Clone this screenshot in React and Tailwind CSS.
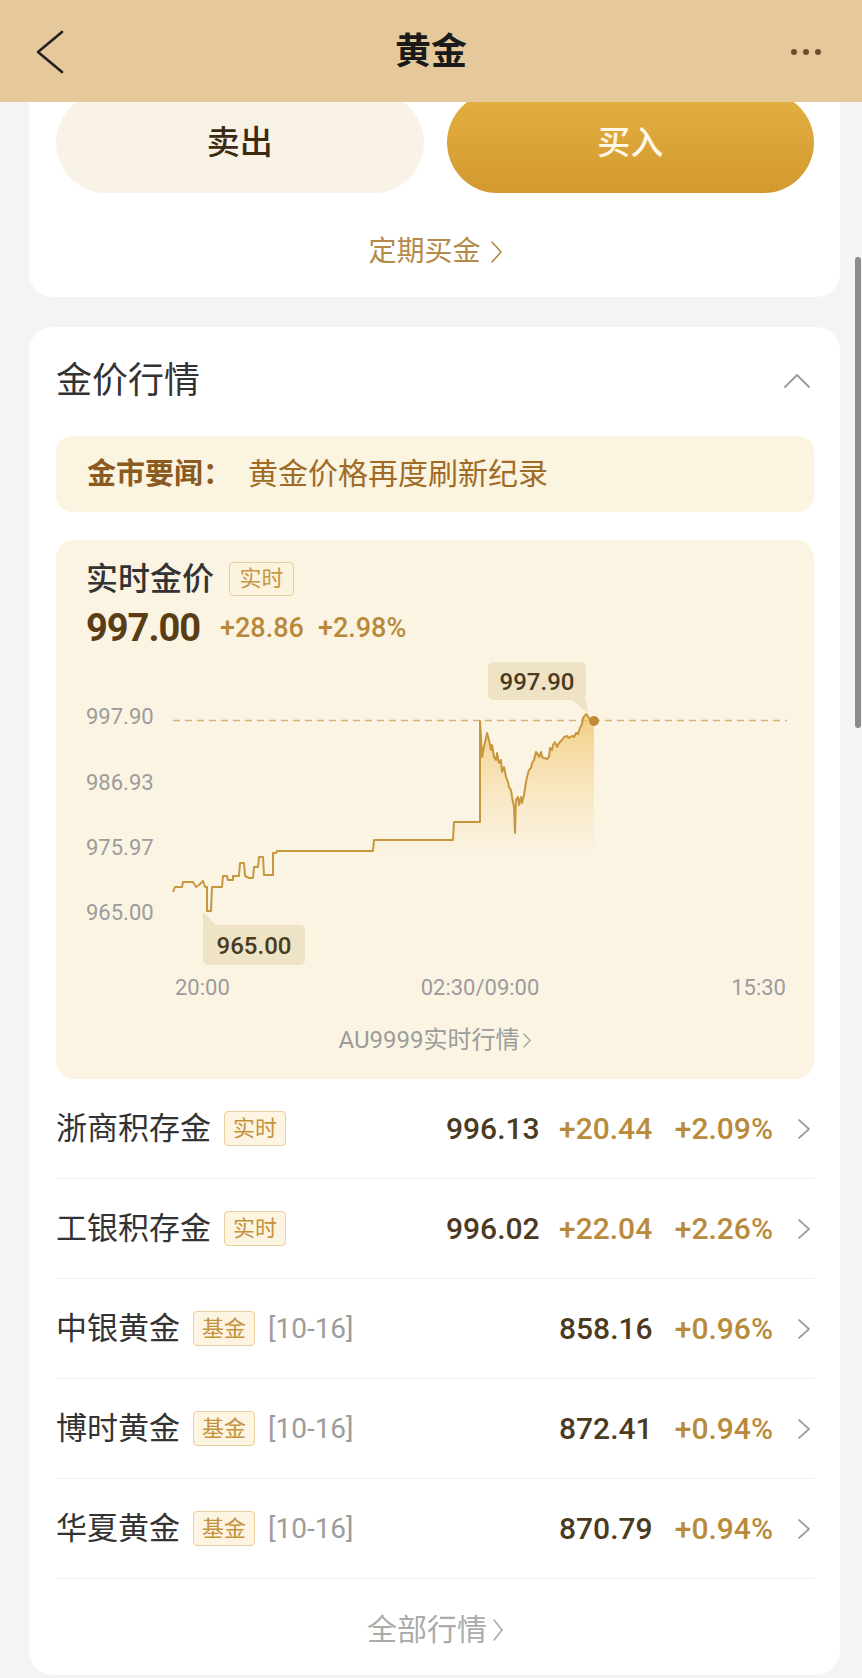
import React from "react";

const linePts = [
  [173, 892], [175, 887], [182, 887], [183, 882], [193, 882], [196, 887], [199, 885], [203, 881], [205, 887], [207, 887], [207, 911], [211, 911], [212, 887], [222, 887], [223, 876], [227, 876], [228, 880], [233, 880], [233, 876], [239, 876], [240, 863], [244, 863], [245, 876], [249, 878], [253, 878], [254, 867], [258, 867], [259, 857], [263, 857], [264, 875], [273, 875], [273, 853], [276, 853], [277, 851], [373, 851], [374, 840], [453, 840], [454, 822], [480, 822], [480, 721],
  [481, 737], [482, 757], [484, 747], [486, 738], [487, 733], [489, 740], [491, 750], [492, 745], [494, 757], [496, 760], [497, 753], [499, 763], [501, 760], [502, 772], [504, 767], [506, 777], [508, 782], [509, 787], [511, 790], [512, 797], [514, 807], [515, 833], [516, 800], [518, 797], [519, 805], [521, 797], [522, 803], [524, 795], [526, 782], [527, 777], [529, 770], [531, 768], [532, 763], [534, 760], [536, 752], [537, 753], [539, 757], [541, 752], [542, 757], [544, 758], [547, 759], [549, 757], [550, 748], [552, 750], [553, 745], [555, 742], [557, 747], [559, 743], [562, 740], [564, 737], [567, 736], [569, 738], [572, 736], [574, 737], [576, 733], [578, 734], [580, 728], [582, 724], [583, 718], [586, 714], [587, 715], [589, 718], [591, 720], [594, 721],
];

const lineD = "M" + linePts.map((p) => p.join(",")).join(" L");
const fillD = lineD + " L594,905 L173,905 Z";

function Chevron({ className = "", color = "#999", w = 12, h = 20, sw = 1.8 }) {
  return (
    <svg width={w} height={h} viewBox={`0 0 ${w} ${h}`} className={className}>
      <polyline points={`1,1 ${w - 1},${h / 2} 1,${h - 1}`} fill="none" stroke={color} strokeWidth={sw} strokeLinecap="round" strokeLinejoin="round" />
    </svg>
  );
}

function Badge({ children }) {
  return (
    <span className="inline-flex items-center justify-center h-[35px] w-[62px] rounded-[4px] border border-[#E8CF9E] bg-[#FDF4E2] text-[22px] text-[#C5923C] leading-none">
      {children}
    </span>
  );
}

const rows = [
  { name: "浙商积存金", badge: "实时", price: "996.13", change: "+20.44", pct: "+2.09%" },
  { name: "工银积存金", badge: "实时", price: "996.02", change: "+22.04", pct: "+2.26%" },
  { name: "中银黄金", badge: "基金", date: "[10-16]", price: "858.16", pct: "+0.96%" },
  { name: "博时黄金", badge: "基金", date: "[10-16]", price: "872.41", pct: "+0.94%" },
  { name: "华夏黄金", badge: "基金", date: "[10-16]", price: "870.79", pct: "+0.94%" },
];

export default function App() {
  return (
    <div className="relative w-[862px] min-h-[1678px] bg-[#F4F4F4] overflow-hidden [font-family:Roboto,'Noto_Sans_CJK_SC',sans-serif]">
      {/* Header */}
      <header className="relative z-10 h-[102px] bg-[#E5C99B] flex items-center">
        <div className="w-[110px] pl-[36px] pt-[2px] flex items-center">
          <svg width="28" height="44" viewBox="0 0 28 44">
            <polyline points="26,2 2,22 26,42" fill="none" stroke="#222" strokeWidth="2.6" strokeLinecap="round" strokeLinejoin="round" />
          </svg>
        </div>
        <div className="flex-1 text-center text-[36px] font-bold text-[#1A1A1A] leading-none pt-[2px]">黄金</div>
        <div className="w-[110px] pr-[41px] flex items-center justify-end gap-[6px] pt-[2px]">
          <span className="w-[6px] h-[6px] rounded-full bg-[#6B4E2A]" />
          <span className="w-[6px] h-[6px] rounded-full bg-[#6B4E2A]" />
          <span className="w-[6px] h-[6px] rounded-full bg-[#6B4E2A]" />
        </div>
      </header>

      {/* Card 1 */}
      <section className="-mt-[10px] ml-[29px] mr-[22px] bg-white rounded-b-[24px] pl-[27px] pr-[26px] pb-[25px]">
        <div className="flex gap-[23px]">
          <div className="flex-1 h-[101px] rounded-full bg-[#F8F3E6] flex items-center justify-center text-[33px] font-medium text-[#3D2A12] leading-none">卖出</div>
          <div className="flex-1 h-[101px] rounded-full bg-gradient-to-b from-[#E3B042] to-[#D3992F] flex items-center justify-center text-[33px] font-medium text-[#FFF8E6] leading-none">买入</div>
        </div>
        <div className="mt-[39px] h-[40px] flex items-center justify-center gap-[10px] text-[28px] text-[#B38A47] leading-none">
          <span>定期买金</span>
          <Chevron color="#B38A47" w={11} h={22} sw={1.6} />
        </div>
      </section>

      {/* Card 2 */}
      <section className="mt-[30px] ml-[29px] mr-[22px] bg-white rounded-[24px] pl-[27px] pr-[26px] pt-[34px] pb-[25px]">
        <div className="h-[40px] flex items-center justify-between">
          <span className="text-[36px] text-[#333] leading-none">金价行情</span>
          <svg width="28" height="16" viewBox="0 0 28 16" className="mr-[3px]">
            <polyline points="2,14 14,2 26,14" fill="none" stroke="#9A9A9A" strokeWidth="1.8" strokeLinecap="round" strokeLinejoin="round" />
          </svg>
        </div>

        <div className="mt-[35px] h-[76px] rounded-[16px] bg-[#FBF4E1] flex items-center pl-[31px] leading-none">
          <span className="text-[29px] font-bold text-[#8B5A1E]">金市要闻：</span>
          <span className="ml-[16px] text-[30px] text-[#A06C25]">黄金价格再度刷新纪录</span>
        </div>

        {/* Chart box */}
        <div className="mt-[28px] h-[539px] rounded-[18px] bg-[#FBF4E3] pt-[19px] pb-[19px]">
          <div className="h-[40px] pl-[30px] flex items-center gap-[15px]">
            <span className="text-[32px] font-medium text-[#333] leading-none">实时金价</span>
            <span className="inline-flex items-center justify-center h-[34px] w-[65px] rounded-[4px] border border-[#E6CFA0] bg-[#FCF3DF] text-[22px] text-[#C69545] leading-none">实时</span>
          </div>
          <div className="mt-[7px] h-[44px] pl-[30px] flex items-center leading-none">
            <span className="text-[38px] font-bold tracking-[-1px] text-[#5A3D14]">997.00</span>
            <span className="ml-[20px] text-[27px] font-medium text-[#B8893A]">+28.86</span>
            <span className="ml-[14px] text-[27px] font-medium text-[#B8893A]">+2.98%</span>
          </div>
          <svg width="758" height="355" viewBox="56 650 758 355" className="block">
            <defs>
              <linearGradient id="gfill" x1="0" y1="720" x2="0" y2="860" gradientUnits="userSpaceOnUse">
                <stop offset="0" stopColor="#F0C46A" stopOpacity="0.75" />
                <stop offset="1" stopColor="#F5D9A0" stopOpacity="0" />
              </linearGradient>
            </defs>
            <g fontFamily="Roboto, 'Noto Sans CJK SC', sans-serif" fontSize="22" fill="#9C9C9C">
              <text x="86" y="716" dominantBaseline="central">997.90</text>
              <text x="86" y="782" dominantBaseline="central">986.93</text>
              <text x="86" y="847" dominantBaseline="central">975.97</text>
              <text x="86" y="912" dominantBaseline="central">965.00</text>
              <text x="175" y="987" dominantBaseline="central">20:00</text>
              <text x="480" y="987" dominantBaseline="central" textAnchor="middle">02:30/09:00</text>
              <text x="786" y="987" dominantBaseline="central" textAnchor="end">15:30</text>
            </g>
            <line x1="173" y1="720.5" x2="787" y2="720.5" stroke="#D9B474" strokeWidth="1.5" strokeDasharray="7 5" />
            <path d={fillD} fill="url(#gfill)" />
            <path d={lineD} fill="none" stroke="#C7973F" strokeWidth="2" strokeLinejoin="round" />
            <circle cx="594" cy="721" r="5" fill="#C28A35" />
            <rect x="488" y="662" width="98" height="38" rx="5" fill="#EFE3C5" />
            <polygon points="571,699 586,699 588,713" fill="#EFE3C5" />
            <text x="537" y="682" dominantBaseline="central" textAnchor="middle" fontSize="24" fontWeight="500" fill="#4A3A22" fontFamily="Roboto, sans-serif">997.90</text>
            <rect x="203" y="925" width="102" height="40" rx="5" fill="#EFE3C5" />
            <polygon points="203,927 218,927 203,912" fill="#EFE3C5" />
            <text x="254" y="946" dominantBaseline="central" textAnchor="middle" fontSize="24" fontWeight="500" fill="#4A3A22" fontFamily="Roboto, sans-serif">965.00</text>
          </svg>
          <div className="mt-[15px] h-[40px] flex items-center justify-center gap-[4px] text-[24px] text-[#9C9C9C] leading-none">
            <span>AU9999实时行情</span>
            <Chevron color="#A8A8A8" w={8} h={15} sw={1.5} />
          </div>
        </div>

        {/* Rows */}
        {rows.map((r) => (
          <div key={r.name} className="h-[100px] border-b border-[#EFEFEF] flex items-center leading-none">
            <span className="text-[31px] text-[#333]">{r.name}</span>
            <span className="ml-[13px]">
              <Badge>{r.badge}</Badge>
            </span>
            {r.date && <span className="ml-[13px] text-[28px] text-[#9C9C9C]">{r.date}</span>}
            <div className="ml-auto flex items-center text-[30px] font-medium">
              {r.change ? (
                <>
                  <span className="w-[93px] text-right text-[#4B3A1F]">{r.price}</span>
                  <span className="ml-[20px] w-[93px] text-right text-[#B88A3B]">{r.change}</span>
                </>
              ) : (
                <span className="w-[93px] text-right text-[#4B3A1F]">{r.price}</span>
              )}
              <span className="ml-[19px] w-[102px] text-right text-[#B88A3B]">{r.pct}</span>
              <Chevron className="ml-[25px] mr-[4px]" color="#A0A0A0" w={12} h={20} sw={1.8} />
            </div>
          </div>
        ))}

        <div className="mt-[31px] h-[40px] flex items-center justify-center gap-[6px] text-[30px] text-[#ABABAB] leading-none">
          <span>全部行情</span>
          <Chevron color="#ABABAB" w={10} h={22} sw={1.6} />
        </div>
      </section>

      <div className="absolute right-[1px] top-[257px] w-[6px] h-[471px] rounded-full bg-[#8C8C8C]" />
    </div>
  );
}
